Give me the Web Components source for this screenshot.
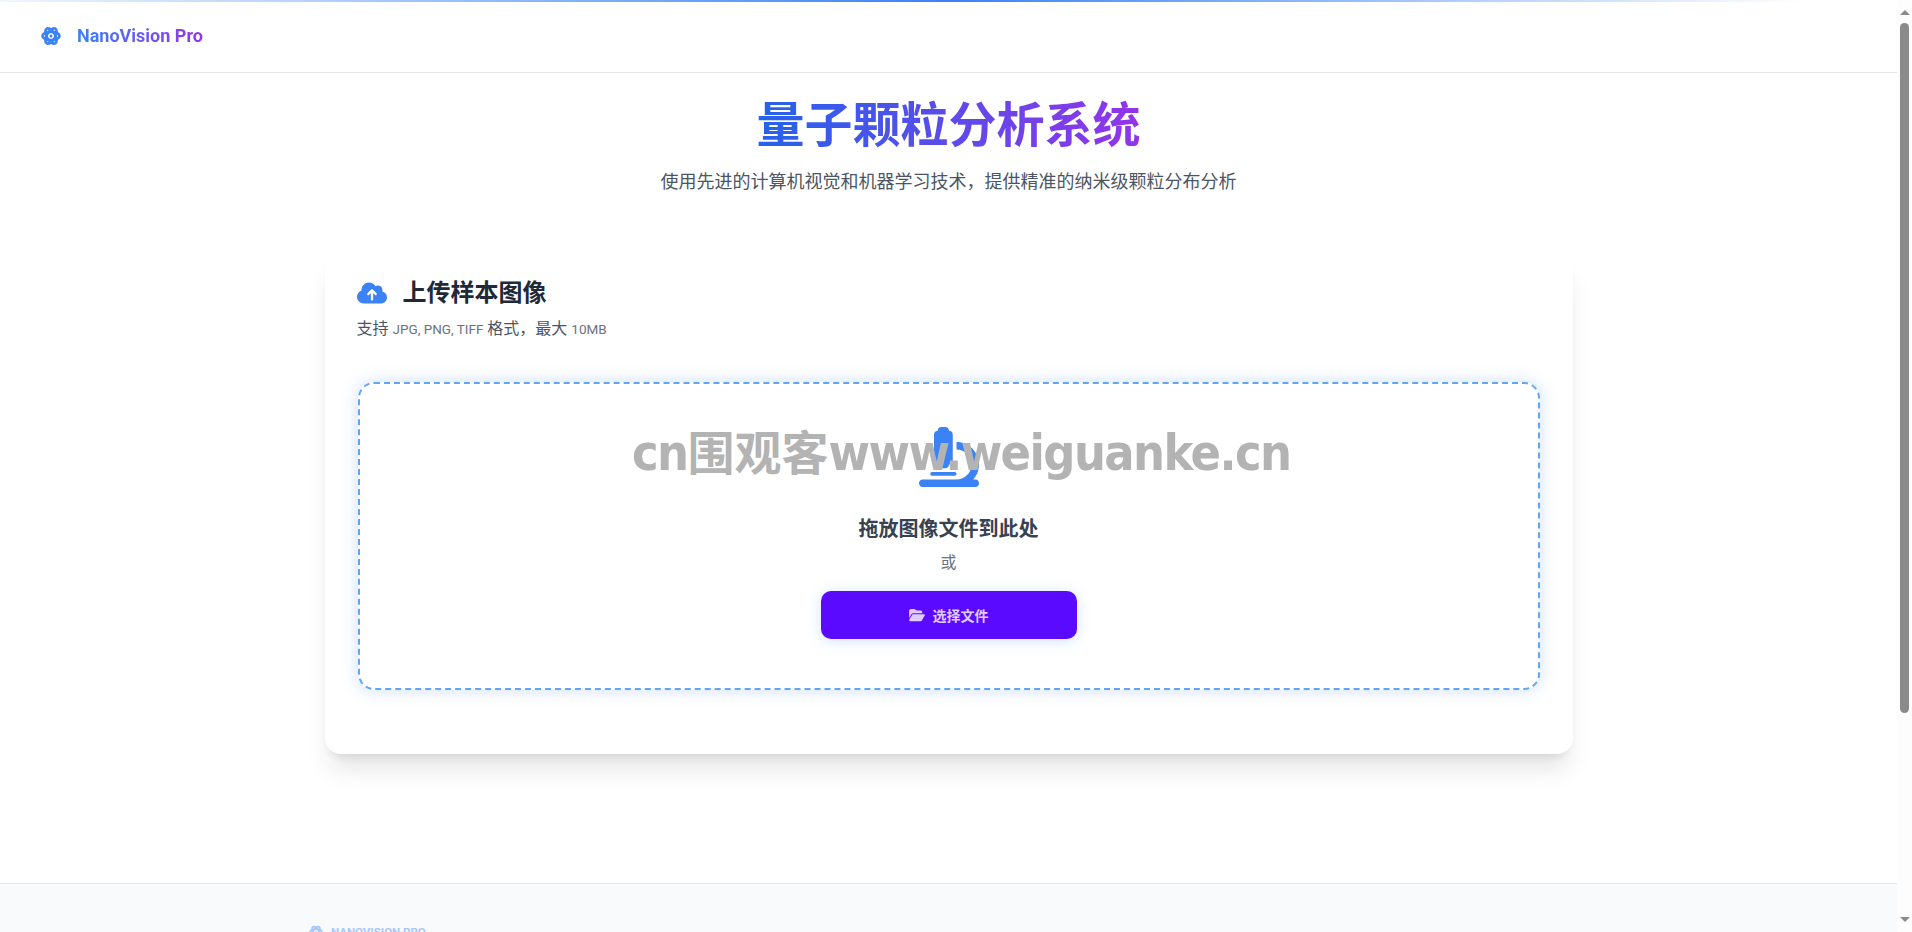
<!DOCTYPE html>
<html lang="zh">
<head>
<meta charset="utf-8">
<title>NanoVision Pro</title>
<style>
	body {
		margin: 0;
		padding-right: 15px;
		position: relative;
		background: #fff;
		font-family: Roboto, "Noto Sans CJK SC", sans-serif;
	}
</style>
</head>
<body>
<nv-header></nv-header>
<nv-hero heading="量子颗粒分析系统">使用先进的计算机视觉和机器学习技术，提供精准的纳米级颗粒分布分析</nv-hero>
<nv-upload-card></nv-upload-card>
<nv-footer></nv-footer>
<nv-watermark></nv-watermark>
<nv-scrollbar></nv-scrollbar>

<script>
	const ICONS = {
		cloud: '<svg viewBox="0 0 640 512" width="30" height="24" fill="#3b82f6"><path d="M144 480C64.5 480 0 415.5 0 336c0-62.8 40.2-116.2 96.2-135.9c-.1-2.7-.2-5.4-.2-8.1c0-88.4 71.6-160 160-160c59.3 0 111 32.2 138.7 80.2C409.9 102 428.3 96 448 96c53 0 96 43 96 96c0 12.2-2.3 23.8-6.4 34.6C596 238.4 640 290.1 640 352c0 70.7-57.3 128-128 128H144zm79-217c-9.4 9.4-9.4 24.6 0 33.9s24.6 9.4 33.9 0l39-39V392c0 13.3 10.7 24 24 24s24-10.7 24-24V257.9l39 39c9.4 9.4 24.6 9.4 33.9 0s9.4-24.6 0-33.9l-80-80c-9.4-9.4-24.6-9.4-33.9 0l-80 80z"/></svg>',
		microscope: '<svg viewBox="0 0 512 512" width="60" height="60" fill="#3b82f6"><path d="M160 32c0-17.7 14.3-32 32-32h32c17.7 0 32 14.3 32 32c17.7 0 32 14.3 32 32V288c0 17.7-14.3 32-32 32c0 17.7-14.3 32-32 32H192c-17.7 0-32-14.3-32-32c-17.7 0-32-14.3-32-32V64c0-17.7 14.3-32 32-32zM32 448H320c70.7 0 128-57.3 128-128s-57.3-128-128-128V128c106 0 192 86 192 192c0 49.2-18.5 94-48.9 128H480c17.7 0 32 14.3 32 32s-14.3 32-32 32H320 32c-17.7 0-32-14.3-32-32s14.3-32 32-32zm80-64H304c8.8 0 16 7.2 16 16s-7.2 16-16 16H112c-8.8 0-16-7.2-16-16s7.2-16 16-16z"/></svg>',
		folder: '<svg viewBox="0 0 576 512" width="16" height="14" fill="currentColor"><path d="M88.7 223.8L0 375.8V96C0 60.7 28.7 32 64 32H181.5c17 0 33.3 6.7 45.3 18.7l26.5 26.5c12 12 28.3 18.7 45.3 18.7H416c35.3 0 64 28.7 64 64v32H144c-22.8 0-43.8 12.1-55.3 31.8zm27.6 16.1C122.1 230 132.6 224 144 224H544c11.5 0 22 6.1 27.7 16.1s5.7 22.2-.1 32.1l-112 192C453.9 474 443.4 480 432 480H32c-11.5 0-22-6.1-27.7-16.1s-5.7-22.2 .1-32.1l112-192z"/></svg>'
	};

	// small atom mark, used in the header and the footer
	function atomIcon(size, color) {
		return `<svg viewBox="0 0 24 24" width="${size}" height="${size}" fill="none" stroke="${color}" stroke-width="3.2">
			<ellipse cx="12" cy="12" rx="10.2" ry="5"/>
			<ellipse cx="12" cy="12" rx="10.2" ry="5" transform="rotate(60 12 12)"/>
			<ellipse cx="12" cy="12" rx="10.2" ry="5" transform="rotate(120 12 12)"/>
			<circle cx="12" cy="12" r="1.8" fill="${color}" stroke="none"/>
		</svg>`;
	}

	class BaseElement extends HTMLElement {
		constructor(markup) {
			super();
			this.attachShadow({mode: 'open'}).innerHTML = markup;
		}
	}

	class NvHeader extends BaseElement {
		constructor() {
			super(`<style>
				:host { display: block; }
				.line { height: 2px; background: linear-gradient(90deg, #eff6ff 0%, #3b82f6 50%, transparent 95%); }
				header {
					height: 68px;
					padding: 0 0 2px 41px;
					border-bottom: 1px solid #e5e7eb;
					display: flex;
					align-items: center;
					gap: 16px;
				}
				svg { display: block; }
				.brand {
					margin-bottom: 2px;
					font-size: 18px;
					font-weight: 700;
					background: linear-gradient(90deg, #3b82f6, #9333ea);
					-webkit-background-clip: text;
					background-clip: text;
					color: transparent;
				}
			</style>
			<div class="line"></div>
			<header>${atomIcon(20, '#3b82f6')}<span class="brand">NanoVision Pro</span></header>`);
		}
	}

	class NvHero extends BaseElement {
		constructor() {
			super(`<style>
				:host { display: block; text-align: center; }
				h1 {
					margin: 0 auto;
					padding-top: 23px;
					width: fit-content;
					font-size: 48px;
					line-height: 60px;
					font-weight: 700;
					background: linear-gradient(90deg, #2563eb, #9333ea);
					-webkit-background-clip: text;
					background-clip: text;
					color: transparent;
				}
				p { margin: 12px 0 0; font-size: 18px; line-height: 28px; color: #4b5563; }
			</style>
			<h1></h1>
			<p><slot></slot></p>`);
		}

		connectedCallback() {
			this.shadowRoot.querySelector('h1').textContent = this.getAttribute('heading');
		}
	}

	class NvUploadCard extends BaseElement {
		constructor() {
			super(`<style>
				:host { display: block; width: 1248px; margin: 57px auto 0; }
				section {
					background: #fff;
					border-radius: 16px;
					padding: 24px 32px 64px;
					box-shadow: 0 20px 25px -5px rgba(0,0,0,.1), 0 8px 10px -6px rgba(0,0,0,.1);
				}
				.head { display: flex; align-items: center; gap: 16px; }
				svg { display: block; }
				h2 { margin: 0; font-size: 24px; line-height: 32px; font-weight: 700; color: #1f2937; }
				.hint { margin: 8px 0 0; font-size: 16px; line-height: 24px; color: #4b5563; }
				.hint span { font-size: 13.5px; color: #6b7280; }
			</style>
			<section>
				<div class="head">${ICONS.cloud}<h2>上传样本图像</h2></div>
				<p class="hint">支持 <span>JPG, PNG, TIFF</span> 格式，最大 <span>10MB</span></p>
				<nv-dropzone></nv-dropzone>
			</section>`);
		}
	}

	class NvDropzone extends BaseElement {
		constructor() {
			super(`<style>
				:host { display: block; margin: 41px 1px 0; }
				.zone {
					height: 261px;
					padding-top: 43px;
					border: 2px dashed #60a5fa;
					border-radius: 16px;
					box-shadow: 0 0 16px rgba(59,130,246,.25);
					display: flex;
					flex-direction: column;
					align-items: center;
				}
				svg { display: block; }
				h3 { margin: 28px 0 0; font-size: 20px; line-height: 28px; font-weight: 700; color: #374151; }
				p { margin: 8px 0 0; font-size: 16px; line-height: 24px; color: #6b7280; }
				nv-button { margin-top: 16px; }
			</style>
			<div class="zone">
				${ICONS.microscope}
				<h3>拖放图像文件到此处</h3>
				<p>或</p>
				<nv-button>选择文件</nv-button>
			</div>`);
		}
	}

	class NvButton extends BaseElement {
		constructor() {
			super(`<style>
				:host { display: block; }
				button {
					width: 256px;
					height: 48px;
					border: 0;
					border-radius: 10px;
					background: #5a0aff;
					color: #e0ccff;
					font: 700 14px Roboto, "Noto Sans CJK SC", sans-serif;
					display: flex;
					align-items: center;
					justify-content: center;
					gap: 8px;
					box-shadow: 0 2px 14px rgba(59,130,246,.22);
				}
				svg { display: block; }
			</style>
			<button type="button">${ICONS.folder}<slot></slot></button>`);
		}
	}

	class NvFooter extends BaseElement {
		constructor() {
			super(`<style>
				:host { display: block; margin-top: 129px; }
				footer {
					height: 275px;
					padding: 40px 0 0 309px;
					background: #f8fafc;
					border-top: 1px solid #e5e7eb;
				}
				.brand {
					display: flex;
					align-items: center;
					gap: 8px;
					font-size: 11.5px;
					line-height: 16px;
					font-weight: 700;
					text-transform: uppercase;
					color: #a9c6fb;
				}
				svg { display: block; }
			</style>
			<footer><div class="brand">${atomIcon(14, '#a9c6fb')}<span>NanoVision Pro</span></div></footer>`);
		}
	}

	class NvWatermark extends BaseElement {
		constructor() {
			super(`<style>
				:host {
					position: absolute;
					left: 632px;
					top: 420px;
					white-space: nowrap;
					font: 700 47px/66px "DejaVu Sans", "Noto Sans CJK SC", sans-serif;
					color: #b3b3b3;
					pointer-events: none;
				}
				span { font-size: 50px; font-stretch: condensed; letter-spacing: -1.6px; }
			</style><span>cn</span>围观客<span>www.weiguanke.cn</span>`);
		}
	}

	// the browser scrollbar of the reference, drawn since the photograph has none
	class NvScrollbar extends BaseElement {
		constructor() {
			super(`<style>
				:host {
					position: fixed;
					top: 0;
					right: 0;
					bottom: 0;
					width: 15px;
					background: #fdfdfd;
					display: flex;
					flex-direction: column;
					align-items: center;
				}
				.up, .down { width: 0; height: 0; border-left: 5px solid transparent; border-right: 5px solid transparent; }
				.up { margin-top: 10px; border-bottom: 5px solid #8a8a8a; }
				.down { margin-bottom: 10px; border-top: 5px solid #8a8a8a; }
				.thumb { width: 9px; height: 690px; margin-top: 8px; border-radius: 5px; background: #8a8a8a; }
				.track { flex: 1; }
			</style>
			<div class="up"></div>
			<div class="thumb"></div>
			<div class="track"></div>
			<div class="down"></div>`);
		}
	}

	customElements.define('nv-header', NvHeader);
	customElements.define('nv-hero', NvHero);
	customElements.define('nv-button', NvButton);
	customElements.define('nv-dropzone', NvDropzone);
	customElements.define('nv-upload-card', NvUploadCard);
	customElements.define('nv-footer', NvFooter);
	customElements.define('nv-watermark', NvWatermark);
	customElements.define('nv-scrollbar', NvScrollbar);
</script>
</body>
</html>
